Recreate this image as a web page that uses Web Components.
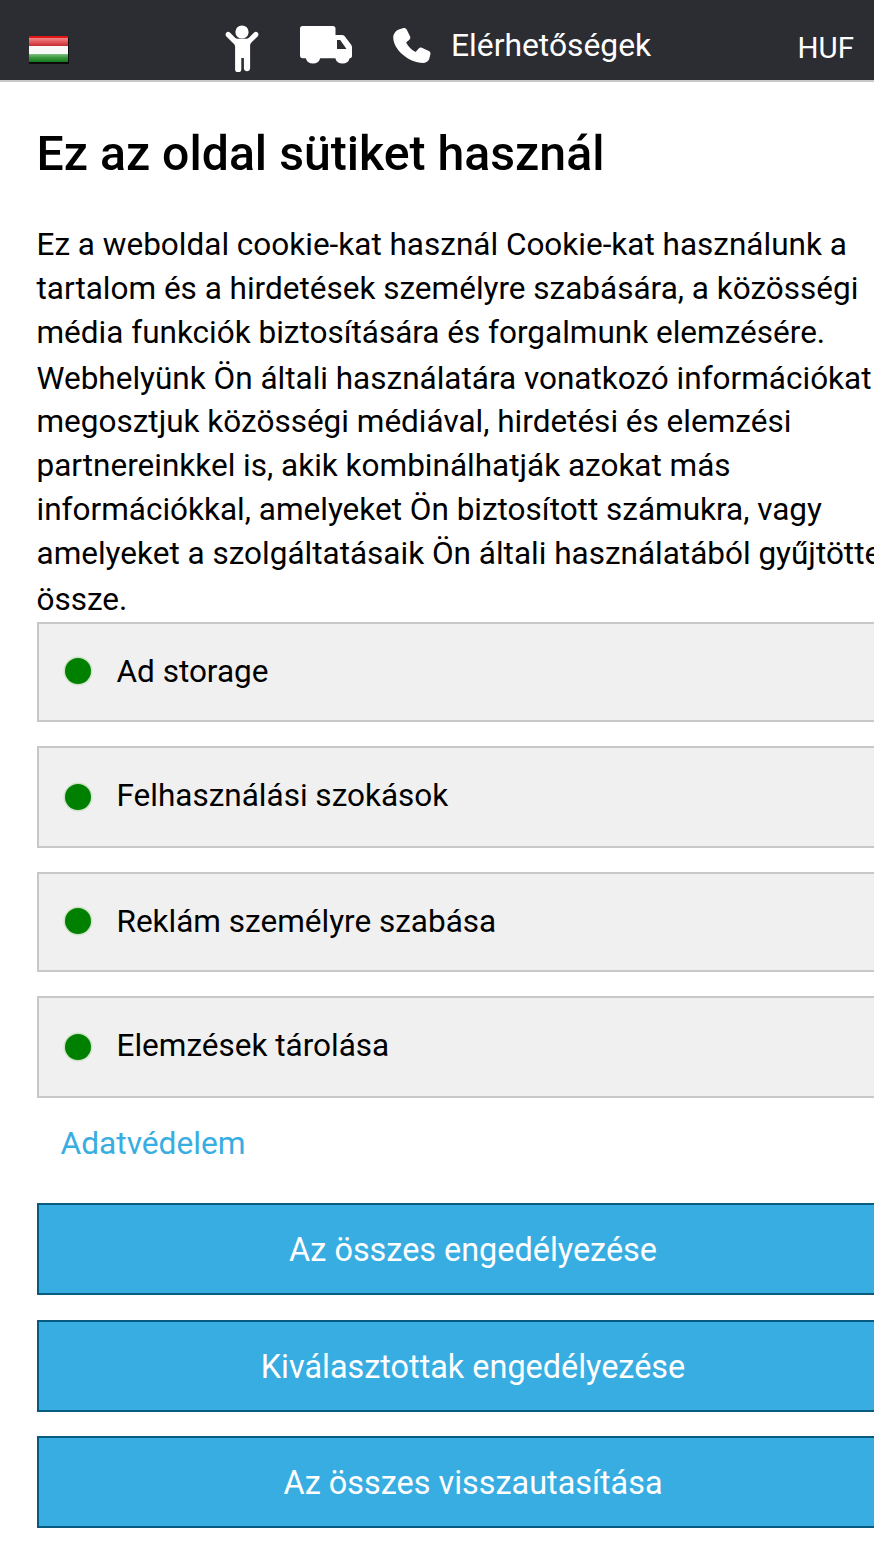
<!DOCTYPE html>
<html lang="hu"><head><meta charset="utf-8"><title>Sütik</title>
<style>
html,body{margin:0;padding:0;background:#fff;overflow:hidden;width:874px;height:1555px}
body{font-family:Roboto,"Liberation Sans",sans-serif;color:#000}
</style></head><body>
<top-bar></top-bar>
<cookie-panel>
  <h1 slot="title">Ez az oldal sütiket használ</h1>
  <text-line h="44" slot="text">Ez a weboldal cookie-kat használ Cookie-kat használunk a</text-line>
  <text-line h="44" slot="text">tartalom és a hirdetések személyre szabására, a közösségi</text-line>
  <text-line h="46" slot="text">média funkciók biztosítására és forgalmunk elemzésére.</text-line>
  <text-line h="43" slot="text">Webhelyünk Ön általi használatára vonatkozó információkat</text-line>
  <text-line h="44" slot="text">megosztjuk közösségi médiával, hirdetési és elemzési</text-line>
  <text-line h="44" slot="text">partnereinkkel is, akik kombinálhatják azokat más</text-line>
  <text-line h="44" slot="text">információkkal, amelyeket Ön biztosított számukra, vagy</text-line>
  <text-line h="46" slot="text">amelyeket a szolgáltatásaik Ön általi használatából gyűjtöttek</text-line>
  <text-line h="44" slot="text">össze.</text-line>
  <consent-row slot="rows" h="100" gap="24" dot="2" txt="0">Ad storage</consent-row>
  <consent-row slot="rows" h="102" gap="24" dot="0" txt="2">Felhasználási szokások</consent-row>
  <consent-row slot="rows" h="100" gap="24" dot="2" txt="0">Reklám személyre szabása</consent-row>
  <consent-row slot="rows" h="102" gap="0" dot="0" txt="2">Elemzések tárolása</consent-row>
  <a slot="link" href="#">Adatvédelem</a>
  <action-button slot="actions" gap="25">Az összes engedélyezése</action-button>
  <action-button slot="actions" gap="24">Kiválasztottak engedélyezése</action-button>
  <action-button slot="actions" gap="0">Az összes visszautasítása</action-button>
</cookie-panel>
<script>
function def(name, html, init){
  customElements.define(name, class extends HTMLElement{
    constructor(){super();this.attachShadow({mode:'open'}).innerHTML=html;}
    connectedCallback(){ if(init) init(this); }
  });
}
def('top-bar',`<style>
:host{display:block;height:82px;box-sizing:border-box;background:#2c2c33;border-bottom:2px solid #c9c9c9;position:relative}
.bar{display:flex;align-items:flex-start;height:80px;color:#fff}
.flag{margin:35px 0 0 28px;width:41px;height:29px;display:block;flex:none}
.i{display:block;flex:none}
.kid{margin:25px 0 0 156px}
.truck{margin:26px 0 0 41px}
.phone{margin:28px 0 0 40px}
.t{font-size:31.8px;line-height:36px;margin:27px 0 0 19px;white-space:nowrap}
.h{font-size:29.5px;line-height:36px;margin:30px 0 0 auto;padding-right:20px}
</style><div class="bar">
<svg class="flag" viewBox="0 0 41 29"><defs>
<linearGradient id="r" x1="0" y1="0" x2="0" y2="1"><stop offset="0" stop-color="#f08a8a"/><stop offset=".5" stop-color="#e0585a"/><stop offset="1" stop-color="#c92c30"/></linearGradient>
<linearGradient id="v" x1="0" y1="0" x2="0" y2="1"><stop offset="0" stop-color="#7cc080"/><stop offset=".45" stop-color="#3c983f"/><stop offset="1" stop-color="#157a1c"/></linearGradient></defs>
<rect x="1" y="1" width="39" height="3" fill="#e01515"/>
<rect x="1" y="26" width="40" height="3" fill="#0b0b0b"/><rect x="40" y="3" width="1" height="24" fill="#0b0b0b"/>
<rect x="1" y="3" width="39" height="8" fill="url(#r)"/><rect x="1" y="11" width="39" height="8" fill="#f8f8f8"/><rect x="1" y="19" width="39" height="8" fill="url(#v)"/></svg>
<svg class="i kid" width="34" height="47" viewBox="0 0 34 47" fill="#fff"><circle cx="17" cy="7" r="6.6"/><path d="M1.2 7.800c1-1.200 2.600-1.300 3.700-.2l5.200 5.200c.7.7 1.600 1 2.600 1h8.600c1 0 1.900-.3 2.600-1l5.200-5.200c1.100-1.100 2.700-1 3.700.2 1 1.100.8 2.700-.2 3.700l-6.400 6.200c-.7.7-1.100 1.600-1.100 2.600v23c0 1.700-1.400 3-3.100 3s-3.100-1.300-3.100-3V33h-2.600v11.500c0 1.700-1.400 3-3.100 3s-3.100-1.300-3.100-3v-23c0-1-.4-1.900-1.100-2.600L1.400 11.500C.4 10.500.2 8.900 1.200 7.800z"/></svg>
<svg class="i truck" width="52" height="43" viewBox="0 0 52 43"><path fill="#fff" fill-rule="evenodd" d="M2.500 0H33c1.500 0 2.500 1 2.500 2.500V9h6.500c1 0 1.900.4 2.500 1.100l6.500 8.500c.6.800 1 1.700 1 2.700V30c0 1.300-.9 2.200-2 2.200h-.3a7.500 7.500 0 0 1-14.400 0H20.200a7.500 7.500 0 0 1-14.400 0H2.500C1 32.200 0 31 0 29.500V2.500C0 1 1 0 2.500 0zM37 14v9h9.500l-6.300-9z"/></svg>
<svg class="i phone" width="40" height="38" viewBox="0 0 40 38"><path fill="#fff" d="M9.200.7l2.300-.6c1.300-.3 2.600.3 3.200 1.500l3.400 7c.5 1.100.2 2.300-.7 3.100l-3.300 2.700c2.200 4.100 5.400 7.500 9.500 9.700l3.100-3.600c.8-.9 2.100-1.200 3.100-.7l7.100 3.300c1.200.6 1.900 1.900 1.500 3.200l-1 4c-.6 2.500-3 4.700-6 4.700C15 34.800.3 19.900 1.300 8.500 1.600 4.800 5 1.500 9.200.7z"/></svg>
<span class="t">Elérhetőségek</span>
<span class="h">HUF</span>
</div>`);
def('text-line',`<style>:host{display:block;white-space:nowrap;font-size:31.5px;line-height:44px;margin-left:-.5px}</style><slot></slot>`,
  el=>{el.style.height=el.getAttribute('h')+'px';});
def('consent-row',`<style>
:host{display:block;box-sizing:border-box;width:872px;background:#f0f0f0;border:2px solid #c8c8c8;font-size:31.5px;white-space:nowrap}
.r{display:flex;align-items:center;height:100%;padding-left:26px;box-sizing:border-box}
.d{width:26px;height:26px;border-radius:50%;background:#008000;box-shadow:0 0 0 1.5px #cfe3c9;flex:none;margin-right:26px}
.x{line-height:44px;margin-left:-.5px}
</style><div class="r"><span class="d"></span><span class="x"><slot></slot></span></div>`,
  el=>{el.style.height=el.getAttribute('h')+'px';el.style.marginBottom=el.getAttribute('gap')+'px';
    const s=el.shadowRoot;s.querySelector('.d').style.marginBottom=el.getAttribute('dot')+'px';s.querySelector('.x').style.paddingBottom=el.getAttribute('txt')+'px';});
def('action-button',`<style>
:host{display:flex;align-items:center;justify-content:center;box-sizing:border-box;width:872px;height:92px;padding-top:2px;background:#38ade2;border:2px solid #075a80;color:#fff;font-size:32.4px;white-space:nowrap}
</style><slot></slot>`,el=>{el.style.marginBottom=el.getAttribute('gap')+'px';});
def('cookie-panel',`<style>
:host{display:block;padding:0 0 0 37px}
::slotted(h1){margin:0 0 0 -.5px;font-size:48.2px;font-weight:500;line-height:56px;white-space:nowrap;padding-top:44px}
.text{padding-top:41px;height:399px}
.rows{display:block}
.l{padding:26px 0 0 23.5px;height:105px;box-sizing:border-box}
::slotted(a){font-size:31.7px;line-height:40px;color:#38ade2;text-decoration:none}
.acts{display:block}
</style><slot name="title"></slot><div class="text"><slot name="text"></slot></div><div class="rows"><slot name="rows"></slot></div><div class="l"><slot name="link"></slot></div><div class="acts"><slot name="actions"></slot></div>`);
</script>
</body></html>
